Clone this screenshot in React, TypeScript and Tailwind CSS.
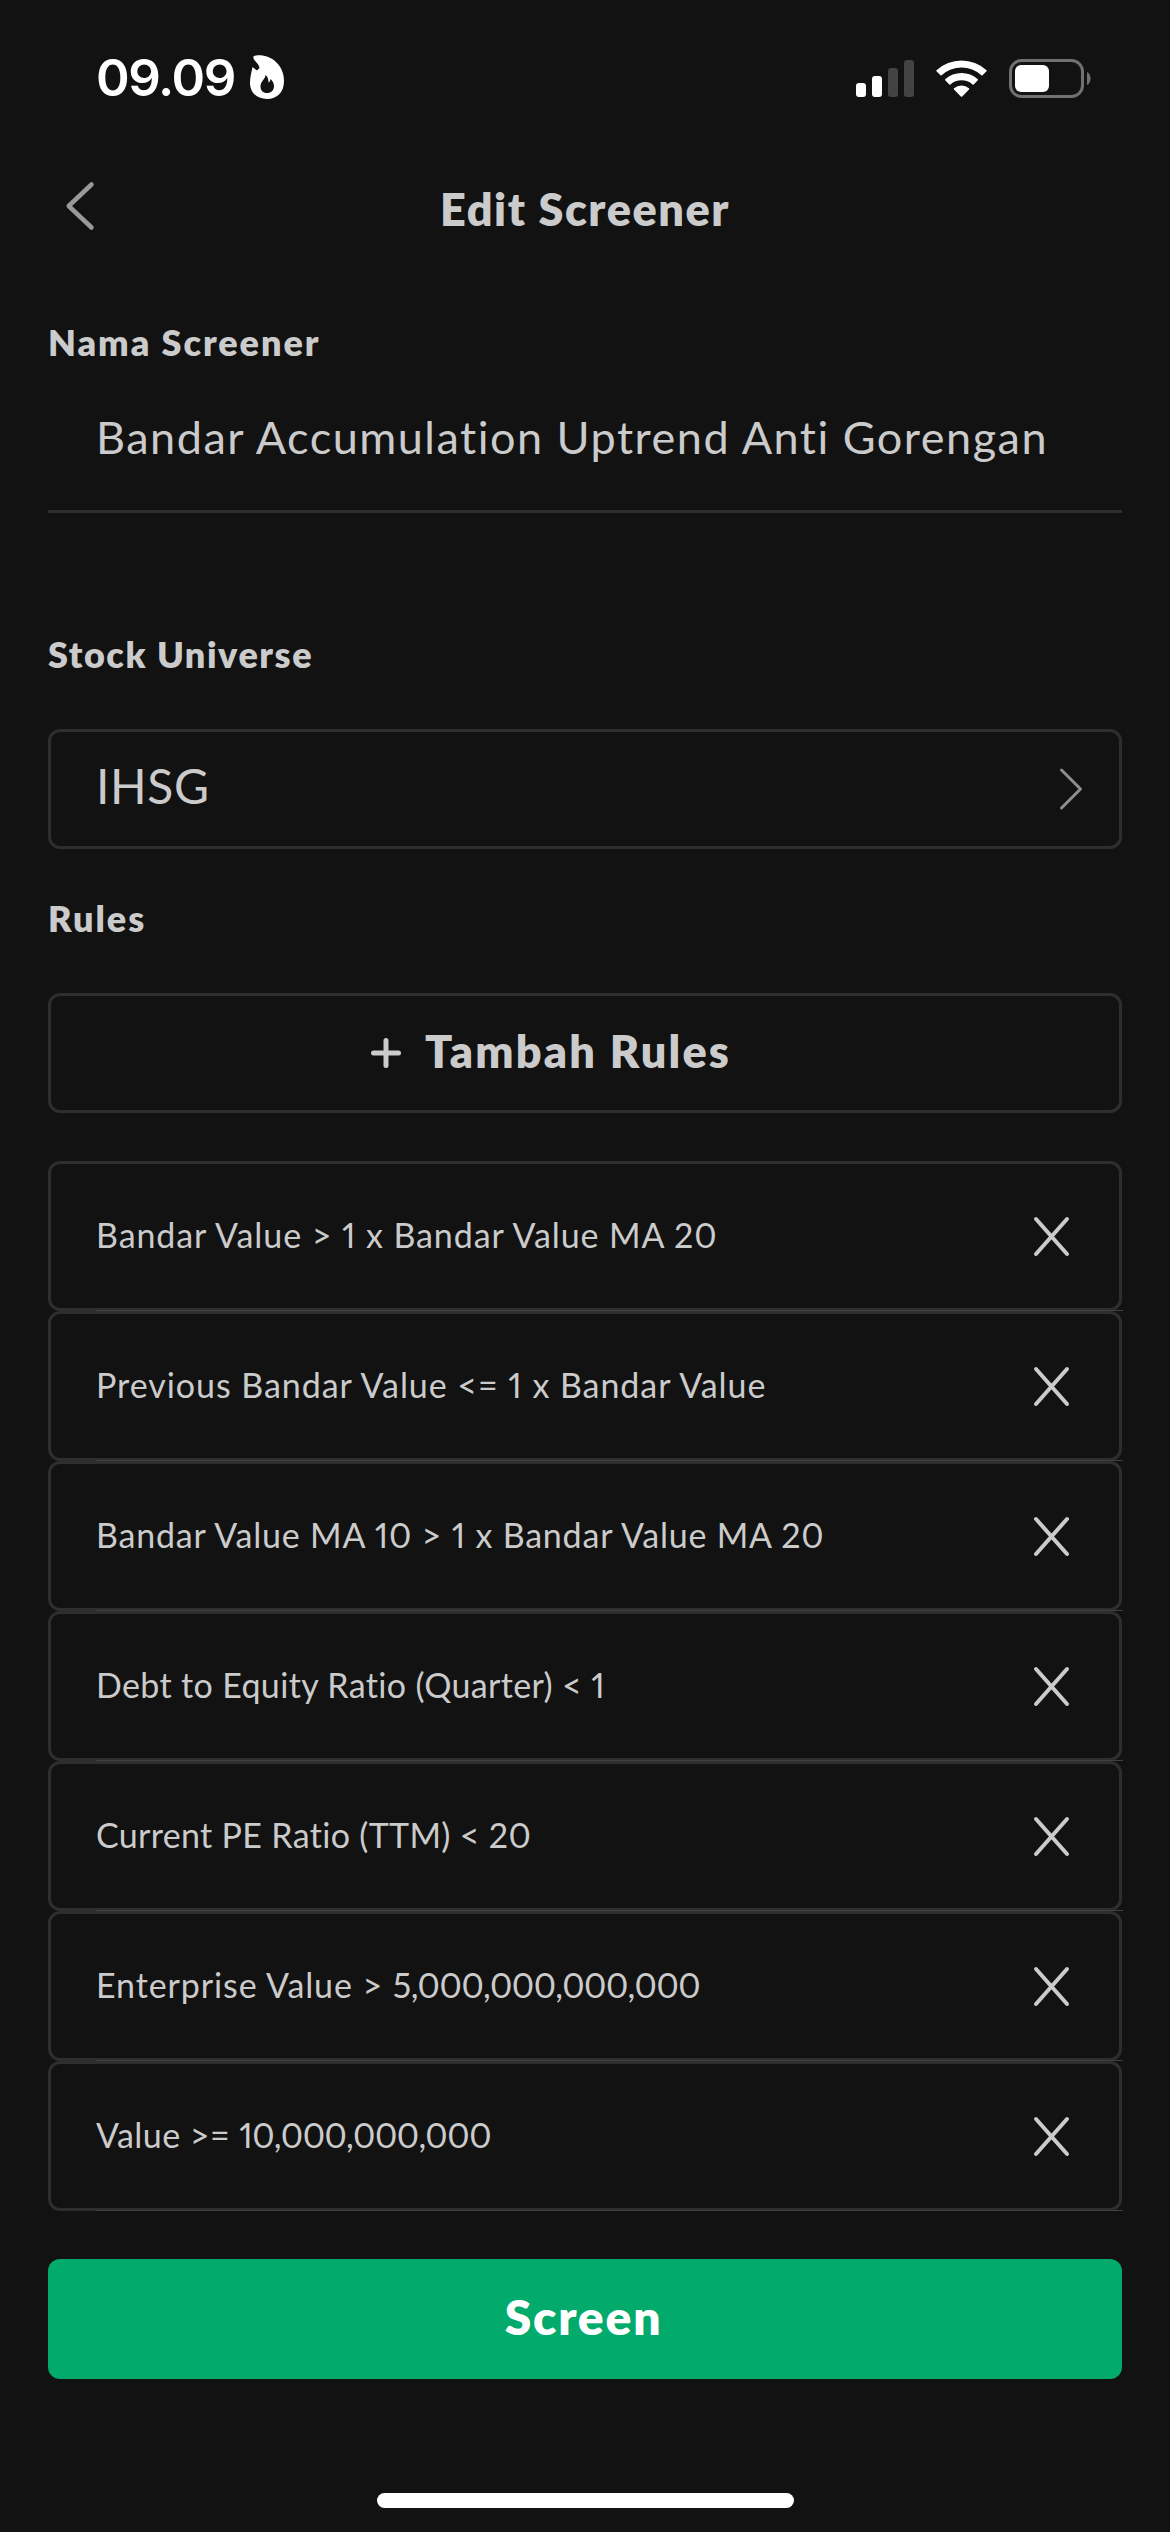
import type { ReactNode } from 'react';

interface Rule {
  text: string;
  amount?: string;
  tracking: string;
}

const rules: Rule[] = [
  { text: 'Bandar Value > 1 x Bandar Value MA 20', tracking: 'tracking-[0.92px]' },
  { text: 'Previous Bandar Value <= 1 x Bandar Value', tracking: 'tracking-[0.95px]' },
  { text: 'Bandar Value MA 10 > 1 x Bandar Value MA 20', tracking: 'tracking-[0.8px]' },
  { text: 'Debt to Equity Ratio (Quarter) < 1', tracking: 'tracking-[0.35px]' },
  { text: 'Current PE Ratio (TTM) < 20', tracking: 'tracking-[0.32px]' },
  { text: 'Enterprise Value > ', amount: '5,000,000,000,000', tracking: 'tracking-[0.9px]' },
  { text: 'Value >= ', amount: '10,000,000,000', tracking: 'tracking-[0.45px]' },
];

function StatusBar() {
  return (
    <div className="flex h-[156px] items-center justify-between pl-24 pr-[78px] text-white">
      <div className="flex items-center">
        <span className="w-[154px] font-['Inter',sans-serif] text-[51px] font-semibold leading-[60px] tracking-[-1.4px]">
          09.09
        </span>
        <svg width="34" height="44" viewBox="0 0 34 44" className="mb-[3px]">
          <path
            fillRule="evenodd"
            fill="currentColor"
            d="M4 1C8-.5 18 0 25.500 6.500C31 11.500 34 18 34 26C34 37.500 27 44 17 44C7 44 0 37.500 0 28C0 22 1.500 17.500 2.500 12L7 15.500L9.500 13C9 9 5.500 7 4 4.500C3.200 3 3 1.500 4 1ZM15.500 20C15.500 24 10.500 26 10.500 31.500C10.500 35.500 13 38 17 38C21 38 24 35.500 24 31C24 27.500 22 25.500 20.500 24C20 26 20 27 18.500 27.500C18.500 25 18 21.500 15.500 20Z"
          />
        </svg>
      </div>
      <div className="flex items-center">
        <svg width="58" height="37" viewBox="0 0 58 37" fill="currentColor">
          <rect x="0" y="23" width="10" height="14" rx="3" />
          <rect x="16" y="16" width="10" height="21" rx="3" />
          <rect x="32" y="8" width="10" height="29" rx="3" fill="#434343" />
          <rect x="48" y="0" width="10" height="37" rx="3" fill="#434343" />
        </svg>
        <svg width="51" height="37" viewBox="0 0 51 37" fill="currentColor" className="ml-[22px]">
          <path d="M0.500 10.200A37 37 0 0 1 50.500 10.200Q51 10.800 50.500 11.300L46.500 15.300Q46 15.800 45.400 15.300A29.500 29.500 0 0 0 5.600 15.300Q5 15.800 4.500 15.300L0.500 11.300Q0 10.800 0.500 10.200Z" />
          <path d="M9.200 19.200A24.500 24.500 0 0 1 41.800 19.200Q42.300 19.800 41.800 20.300L37.700 24.400Q37.200 24.900 36.600 24.400A17 17 0 0 0 14.400 24.400Q13.800 24.900 13.300 24.400L9.200 20.300Q8.700 19.800 9.200 19.200Z" />
          <path d="M18 28.200A12 12 0 0 1 33 28.200Q33.500 28.800 33 29.400L26.200 36.400Q25.500 37 24.800 36.400L18 29.400Q17.500 28.800 18 28.200Z" />
        </svg>
        <svg width="83" height="39" viewBox="0 0 83 39" className="ml-[22px]">
          <rect x="1.500" y="1.500" width="72" height="36" rx="11" fill="none" stroke="#717171" strokeWidth="3" />
          <rect x="6" y="6" width="34" height="27" rx="6" fill="currentColor" />
          <path d="M78 13C82.700 15 82.700 24 78 26Z" fill="#717171" />
        </svg>
      </div>
    </div>
  );
}

function Label({ children, className }: { children: ReactNode; className: string }) {
  return (
    <h2 className={`text-[36px] font-extrabold leading-[44px] ${className}`}>{children}</h2>
  );
}

function RuleRow({ text, amount, tracking }: Rule) {
  return (
    <li className="relative flex h-[150px] items-center justify-between rounded-xl border-3 border-[#2e2e2e] pl-[45px] pr-[47px]">
      <span className={`whitespace-pre pb-[3px] text-[34px] leading-[44px] proportional-nums ${tracking}`}>
        {text}
        {amount && <span className="tracking-[-0.45px]">{amount}</span>}
      </span>
      <button type="button" aria-label="Remove rule">
        <svg width="41" height="45" viewBox="0 0 41 45" fill="none" stroke="currentColor" strokeWidth="4" strokeLinecap="round">
          <path d="M5 5L36 40M36 5L5 40" />
        </svg>
      </button>
      <span className="absolute -bottom-[3px] -right-[4px] left-[45px] h-px bg-[#404040]" />
    </li>
  );
}

export default function App() {
  return (
    <div className="flex h-[2532px] w-[1170px] flex-col overflow-hidden bg-[#121212] font-['Lato',sans-serif] text-[#cbcbcb]">
      <StatusBar />
      <header className="grid h-[100px] grid-cols-[80px_1fr_80px] items-center px-12">
        <button type="button" aria-label="Back" className="pl-[14px]">
          <svg width="36" height="54" viewBox="0 0 36 54" fill="none" stroke="#999999" strokeWidth="4.500" strokeLinecap="round" strokeLinejoin="round">
            <path d="M29.500 5.500L6.700 27L29.500 48.500" />
          </svg>
        </button>
        <h1 className="pt-[5px] text-center text-[45px] font-extrabold leading-[54px] tracking-[1.55px]">Edit Screener</h1>
      </header>
      <main className="flex flex-col px-12">
        <Label className="mt-16 tracking-[1.95px]">Nama Screener</Label>
        <div className="flex h-[149px] items-center border-b-3 border-[#2e2e2e] pl-12">
          <span className="whitespace-pre text-[45px] leading-[54px] tracking-[1.5px]">Bandar Accumulation Uptrend Anti Gorengan</span>
        </div>

        <Label className="mt-[119px] tracking-[1.55px]">Stock Universe</Label>
        <button type="button" className="mt-[53px] flex h-[120px] items-center justify-between rounded-xl border-3 border-[#2e2e2e] pl-[45px] pr-[34px]">
          <span className="pb-[7px] text-[48px] leading-[54px] tracking-[0.6px]">IHSG</span>
          <svg width="28" height="46" viewBox="0 0 28 46" fill="none" stroke="#8e8e8e" strokeWidth="3" strokeLinecap="round" strokeLinejoin="round">
            <path d="M4.500 4L23.500 23L4.500 42" />
          </svg>
        </button>

        <Label className="mt-[47px] tracking-[2px]">Rules</Label>
        <button type="button" className="mt-[53px] flex h-[120px] items-center rounded-xl border-3 border-[#2e2e2e] pl-[320px]">
          <svg width="30" height="30" viewBox="0 0 30 30" fill="none" stroke="currentColor" strokeWidth="5" strokeLinecap="round">
            <path d="M2.500 15H27.500M15 2.500V27.500" />
          </svg>
          <span className="ml-[24px] pb-[5px] text-[45px] font-extrabold leading-[54px] tracking-[2.2px]">Tambah Rules</span>
        </button>

        <ul className="mt-12 flex flex-col">
          {rules.map((rule) => (
            <RuleRow key={rule.text} {...rule} />
          ))}
        </ul>

        <button type="button" className="mt-12 flex h-[120px] items-center justify-center rounded-xl bg-[#02ab6b] pb-[5px] pr-[3px] text-[48px] font-extrabold leading-[54px] tracking-[1.8px] text-white">
          Screen
        </button>
      </main>
      <div className="mx-auto mt-[114px] h-[15px] w-[417px] rounded-full bg-white" />
    </div>
  );
}
